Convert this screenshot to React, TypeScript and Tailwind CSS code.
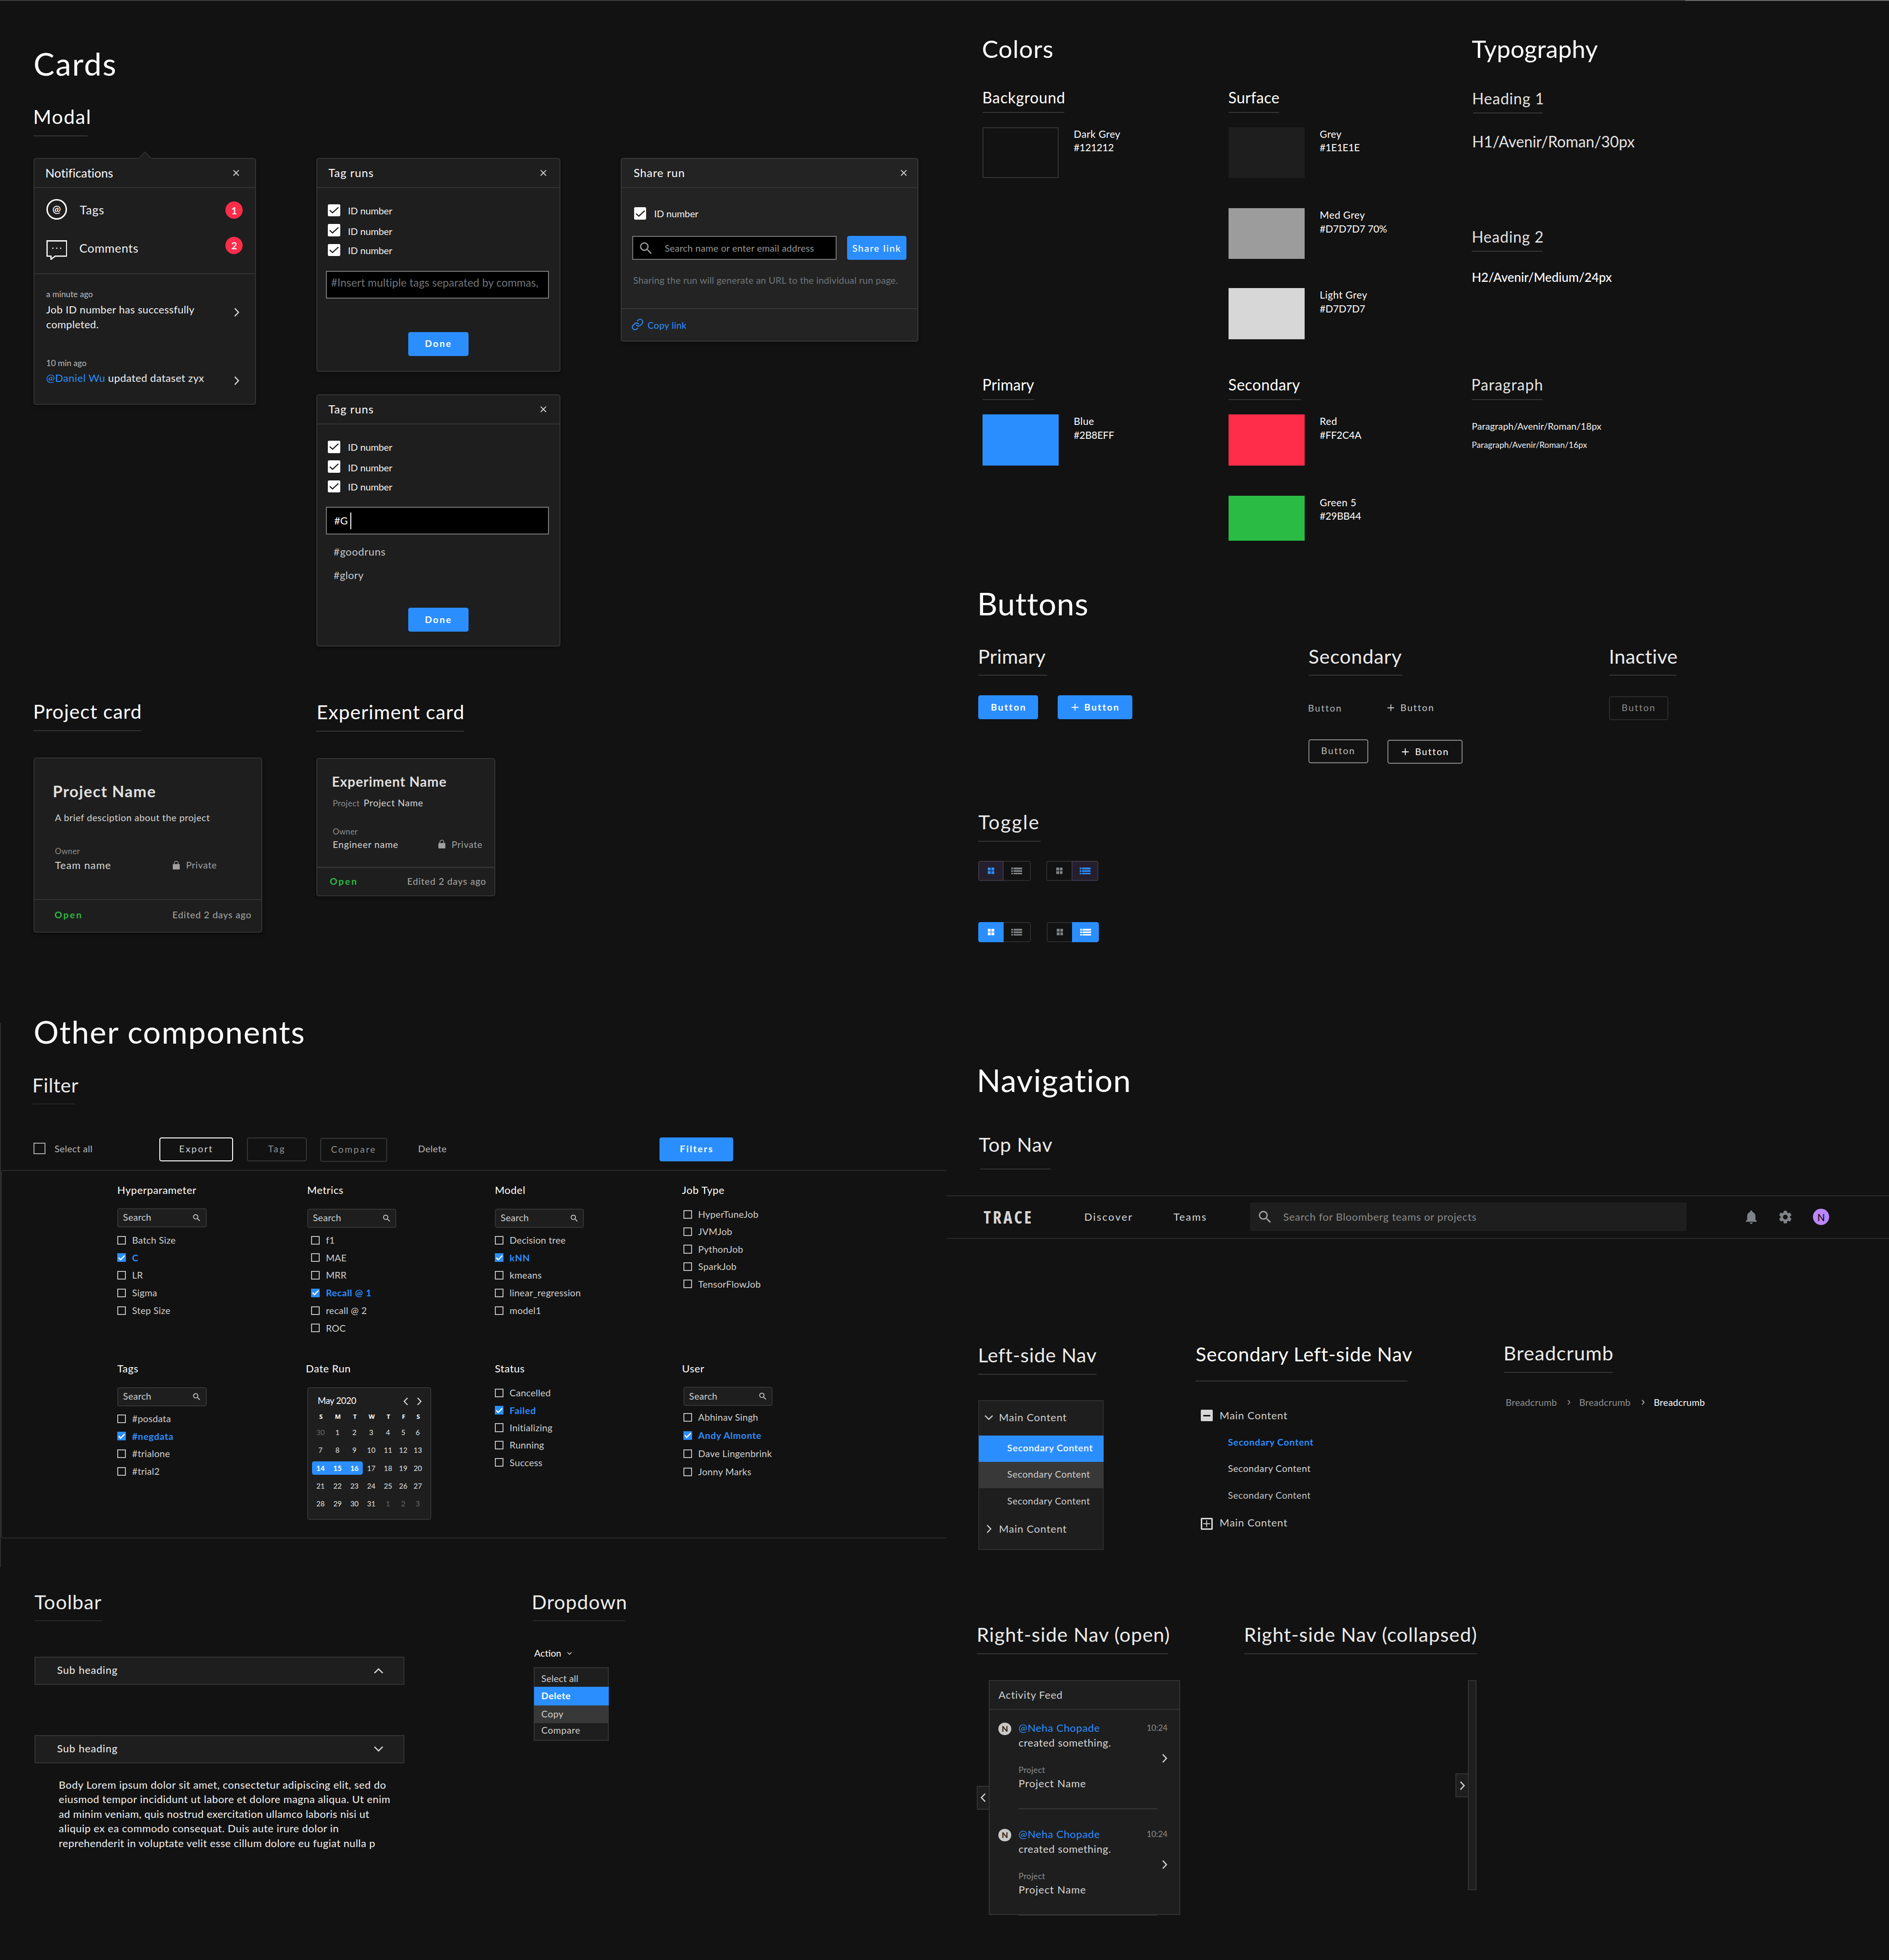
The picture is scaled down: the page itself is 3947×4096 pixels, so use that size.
import type { ReactNode } from "react";
import { MdNotifications, MdSearch, MdSettings } from "react-icons/md";
import { Link } from "lucide-react";

/* ---------- icons ---------- */

const chevronPaths = {
  right: "M1.5 1.5 L10.5 11 L1.5 20.5",
  left: "M10.5 1.5 L1.5 11 L10.5 20.5",
};

function Chevron({ dir = "right", className = "" }: { dir?: "left" | "right"; className?: string }) {
  return (
    <svg viewBox="0 0 12 22" fill="none" stroke="currentColor" strokeWidth="2.8" className={className}>
      <path d={chevronPaths[dir]} />
    </svg>
  );
}

function Caret({ up = false, className = "" }: { up?: boolean; className?: string }) {
  return (
    <svg viewBox="0 0 22 13" fill="none" stroke="currentColor" strokeWidth="2.8" className={className}>
      <path d={up ? "M1.5 11.5 L11 2 L20.5 11.5" : "M1.5 1.5 L11 11 L20.5 1.5"} />
    </svg>
  );
}

function Close() {
  return (
    <svg viewBox="0 0 14 14" stroke="#d7d7d7" strokeWidth="2" className="h-[14px] w-[14px]">
      <path d="M0.8 0.8 L13.2 13.2 M13.2 0.8 L0.8 13.2" />
    </svg>
  );
}

function Lock() {
  return (
    <svg viewBox="0 0 16 20" className="h-[20px] w-[16px]">
      <rect x="0" y="7.5" width="16" height="12.5" rx="1.5" fill="#a0a0a0" />
      <path d="M3.6 8 V5 a4.4 4.2 0 0 1 8.8 0 V8" fill="none" stroke="#a0a0a0" strokeWidth="1.6" />
    </svg>
  );
}

function GridIcon() {
  return (
    <svg viewBox="0 0 15 15" fill="currentColor" className="h-[15px] w-[15px]">
      <rect width="6.6" height="6.6" />
      <rect x="8.2" width="6.6" height="6.6" />
      <rect y="8.2" width="6.6" height="6.6" />
      <rect x="8.2" y="8.2" width="6.6" height="6.6" />
    </svg>
  );
}

function ListIcon() {
  return (
    <svg viewBox="0 0 25 16" fill="currentColor" className="h-[16px] w-[25px]">
      <path d="M0 0h4v4H0zM5.5 0H25v4H5.5zM0 6h4v4H0zM5.5 6H25v4H5.5zM0 12h4v4H0zM5.5 12H25v4H5.5z" />
    </svg>
  );
}

function PlusIcon() {
  return (
    <svg viewBox="0 0 16 16" stroke="currentColor" strokeWidth="2" className="h-[16px] w-[16px]">
      <path d="M8 0V16M0 8H16" />
    </svg>
  );
}

/* ---------- primitives ---------- */

function H1({ children, className }: { children: ReactNode; className: string }) {
  return <h1 className={`text-[72px] leading-[86px] text-white ${className}`}>{children}</h1>;
}

function H2({ children, text = "", className = "" }: { children: ReactNode; text?: string; className?: string }) {
  return (
    <div className={`border-b-[2.2px] pb-4 ${className}`}>
      <h2 className={`text-[45px] leading-[54px] ${text}`}>{children}</h2>
    </div>
  );
}

function H3({ children, text = "", className = "" }: { children: ReactNode; text?: string; className?: string }) {
  return (
    <div className={`border-b-[2.2px] border-[#363636] ${className}`}>
      <h3 className={`text-[35px] leading-[42px] ${text}`}>{children}</h3>
    </div>
  );
}

function CardHeader({ title, className }: { title: string; className: string }) {
  return (
    <div className={`flex h-[68px] items-center justify-between border-b-[2.2px] border-[#333] ${className}`}>
      <span>{title}</span>
      <Close />
    </div>
  );
}

function WhiteCheck() {
  return (
    <span className="flex h-7 w-7 items-center justify-center rounded-[3px] bg-white">
      <svg viewBox="0 0 22 16" fill="none" stroke="#1e1e1e" strokeWidth="2.6" className="h-[16px] w-[22px]">
        <path d="M1 8 L7.5 14 L21 1.5" />
      </svg>
    </span>
  );
}

function IdRow({ text = "" }: { text?: string }) {
  return (
    <div className="flex h-7 items-center">
      <WhiteCheck />
      <span className={`ml-[18px] text-[22px] tracking-[-0.14px] text-[#f2f2f2] ${text}`}>ID number</span>
    </div>
  );
}

function DoneButton({ className }: { className: string }) {
  return (
    <button
      className={`block h-[55px] w-[138px] self-center rounded-[5px] bg-[#2b8eff] pb-[2px] text-[21.5px] font-bold tracking-[2.6px] text-white ${className}`}
    >
      Done
    </button>
  );
}

/* ---------- cards ---------- */

function Notifications() {
  return (
    <div className="relative h-[568px] w-[511px] rounded-[6px] border-[2.2px] border-[#333] bg-[#1e1e1e] shadow-[0_4px_8px_rgba(0,0,0,0.3)]">
      <svg viewBox="0 0 30 18" className="absolute -top-[17px] left-[239px] h-[18px] w-[30px]">
        <path d="M0.5 17 L15 2 L29.5 17 V18 H0.5Z" fill="#1e1e1e" />
        <path d="M0 17 L15 2 L30 17" fill="none" stroke="#333" strokeWidth="2" />
      </svg>
      <CardHeader title="Notifications" className="pr-[36px] pl-[25px] text-[27.5px] tracking-[0.1px] text-white" />
      <div className="h-[197px] border-b-[2.2px] border-[#333] pr-[28px] pl-[27px] text-[27.5px] text-[#f2f2f2]">
        <div className="flex h-[97px] items-center">
          <span className="flex h-12 w-12 items-center justify-center rounded-full border-[3.3px] border-white pb-1 text-[23px] font-bold">
            @
          </span>
          <span className="ml-[29px] flex-1 pt-0.5 tracking-[0.9px]">Tags</span>
          <span className="mt-1 flex h-10 w-10 items-center justify-center rounded-full bg-[#ff2c4a] text-[23px] font-bold">
            1
          </span>
        </div>
        <div className="flex h-[82px] items-center">
          <svg viewBox="0 0 48 46" fill="none" stroke="white" strokeWidth="2.8" className="mt-2 h-[46px] w-[48px]">
            <path d="M1.5 1.5H46.5V36.5H20L10.5 44V36.5H1.5Z" />
            <path d="M13.5 18.5h2.6M22.5 18.5h2.6M31.5 18.5h2.6" />
          </svg>
          <span className="ml-[28px] flex-1 tracking-[0.7px]">Comments</span>
          <span className="mb-[13px] flex h-10 w-10 items-center justify-center rounded-full bg-[#ff2c4a] text-[23px] font-bold">
            2
          </span>
        </div>
      </div>
      <div className="pt-[35px] pr-[36px] pl-[27px]">
        <p className="text-[19px] leading-6 text-[#bdbdbd]">a minute ago</p>
        <div className="mt-1.5 flex justify-between text-[24px] leading-[34px] text-[#f2f2f2]">
          <p className="tracking-[0.42px]">
            Job ID number has successfully
            <br />
            completed.
          </p>
          <Chevron className="mt-3 h-[21px] w-[12px] text-[#d7d7d7]" />
        </div>
        <p className="mt-[60px] text-[19px] leading-6 text-[#bdbdbd]">10 min ago</p>
        <div className="mt-1.5 flex justify-between text-[24px] leading-[34px] text-[#f2f2f2]">
          <p className="tracking-[0.49px]">
            <span className="text-[#2b8eff]">@Daniel Wu</span> updated dataset zyx
          </p>
          <Chevron className="mt-3 h-[21px] w-[12px] text-[#d7d7d7]" />
        </div>
      </div>
    </div>
  );
}

function TagRuns({ children, className }: { children: ReactNode; className: string }) {
  return (
    <div
      className={`flex w-[560px] flex-col rounded-[6px] border-[2.2px] border-[#333] bg-[#1e1e1e] shadow-[0_4px_8px_rgba(0,0,0,0.3)] ${className}`}
    >
      <CardHeader title="Tag runs" className="pr-[30px] pl-[25px] text-[26px] tracking-[1.2px] text-white" />
      <div className="flex flex-col gap-[17.5px] pt-[37px] pl-[24px]">
        <IdRow />
        <IdRow text="pt-1" />
        <IdRow />
      </div>
      {children}
    </div>
  );
}

function ShareRun() {
  return (
    <div className="h-[423px] w-[683px] rounded-[6px] border-[2.2px] border-[#383838] bg-[#232323] shadow-[0_4px_8px_rgba(0,0,0,0.3)]">
      <CardHeader title="Share run" className="pr-[24px] pl-[27px] text-[26px] tracking-[1px] text-white" />
      <div className="pt-[44px] pl-[28px]">
        <IdRow />
      </div>
      <div className="mt-[38px] flex gap-6 pl-[24px]">
        <div className="flex h-[55px] w-[469px] items-center border-[2.2px] border-[#777] bg-black pl-[11px] text-[#959595]">
          <MdSearch className="h-[37px] w-[37px]" />
          <span className="ml-[24px] text-[21.5px] tracking-[0.29px]">Search name or enter email address</span>
        </div>
        <button className="h-[55px] w-[137px] rounded-[5px] bg-[#2b8eff] pb-[2px] text-[22px] font-medium tracking-[1.88px] text-white">
          Share link
        </button>
      </div>
      <p className="mt-[34px] pl-[26px] text-[21.5px] leading-[26px] tracking-[0.23px] text-[#70757a]">
        Sharing the run will generate an URL to the individual run page.
      </p>
      <div className="mt-[50px] flex h-[75px] items-center border-t-[2.2px] border-[#383838] pl-[22px] text-[#2b8eff]">
        <Link className="h-[29px] w-[29px]" strokeWidth={1.9} />
        <span className="ml-[8px] pt-0.5 text-[21.5px] tracking-[0.26px]">Copy link</span>
      </div>
    </div>
  );
}

function ProjectCard() {
  return (
    <div className="flex h-[402px] w-[525px] flex-col rounded-[6px] border-[2.2px] border-[#333] bg-[#1e1e1e] shadow-[0_4px_8px_rgba(0,0,0,0.3)]">
      <div className="flex-1 pt-[54px] pl-[47px] text-[#d7d7d7]">
        <p className="-ml-[5px] text-[36px] leading-[44px] font-bold tracking-[1.6px] text-[#e0e0e0]">Project Name</p>
        <p className="mt-[25px] text-[21.5px] leading-[26px] tracking-[0.63px]">A brief desciption about the project</p>
        <p className="mt-[52px] text-[18.5px] leading-6 tracking-[0.2px] text-[#8c8c8c]">Owner</p>
        <div className="mt-[5px] flex h-[30px] items-center text-[24px]">
          <span className="w-[271px] tracking-[1.09px]">Team name</span>
          <Lock />
          <span className="ml-[14px] text-[21.5px] tracking-[0.71px] text-[#a0a0a0]">Private</span>
        </div>
      </div>
      <div className="flex h-[75px] items-center justify-between border-t-[2.2px] border-[#333] pr-[22px] pb-[5px] pl-[46px] text-[21.5px]">
        <span className="font-bold tracking-[3px] text-[#29bb44]">Open</span>
        <span className="tracking-[0.95px] text-[#a8a8a8]">Edited 2 days ago</span>
      </div>
    </div>
  );
}

function ExperimentCard() {
  return (
    <div className="flex h-[317px] w-[411px] flex-col rounded-[6px] border-[2.2px] border-[#333] bg-[#1e1e1e] shadow-[0_4px_8px_rgba(0,0,0,0.3)]">
      <div className="flex-1 pt-[33px] pl-[35px] text-[#d7d7d7]">
        <p className="-ml-[2px] text-[31px] leading-[38px] font-bold tracking-[1.05px] text-[#e0e0e0]">Experiment Name</p>
        <div className="mt-[17px] flex h-[26px] items-center text-[21.5px]">
          <span className="w-[71px] pt-0.5 text-[19px] tracking-[0.43px] text-[#8c8c8c]">Project</span>
          <span className="tracking-[0.75px]">Project Name</span>
        </div>
        <p className="mt-[41px] text-[18.5px] leading-6 tracking-[0.2px] text-[#8c8c8c]">Owner</p>
        <div className="mt-[4px] flex h-[26px] items-center text-[21.5px]">
          <span className="w-[243px] tracking-[0.85px]">Engineer name</span>
          <Lock />
          <span className="ml-[14px] tracking-[0.71px] text-[#a0a0a0]">Private</span>
        </div>
      </div>
      <div className="flex h-[66px] items-center justify-between border-t-[3.3px] border-[#333] pr-[19px] pb-px pl-[28px] text-[21.5px]">
        <span className="font-bold tracking-[3px] text-[#29bb44]">Open</span>
        <span className="tracking-[0.95px] text-[#a8a8a8]">Edited 2 days ago</span>
      </div>
    </div>
  );
}

/* ---------- filter panel ---------- */

function SearchField({ className }: { className: string }) {
  return (
    <div
      className={`flex h-[44px] w-[205px] items-center justify-between rounded-[5px] border-[2.2px] border-[#333] bg-[#1e1e1e] pr-[9px] pb-0.5 pl-[11px] text-[21.5px] tracking-[0.29px] text-[#d0d0d0] ${className}`}
    >
      Search
      <MdSearch className="mt-0.5 h-[22px] w-[22px]" />
    </div>
  );
}

type Option = [label: string, checked?: boolean];

function Options({ items, className, row = "h-[40.4px]" }: { items: Option[]; className: string; row?: string }) {
  return (
    <ul className={`text-[21.5px] text-[#d0d0d0] ${className}`}>
      {items.map(([label, checked]) => (
        <li key={label} className={`flex items-center ${row}`}>
          {checked ? (
            <span className="flex h-5 w-5 items-center justify-center bg-[#2b8eff]">
              <svg viewBox="0 0 16 12" fill="none" stroke="white" strokeWidth="2.8" className="h-[12px] w-[16px]">
                <path d="M1 6 L5.5 10.5 L15 1" />
              </svg>
            </span>
          ) : (
            <span className="h-5 w-5 border-[2.2px] border-[#bdbdbd]" />
          )}
          <span className={checked ? "ml-[14px] font-bold tracking-[0.75px] text-[#2b8eff]" : "ml-[14px] tracking-[0.3px]"}>
            {label}
          </span>
        </li>
      ))}
    </ul>
  );
}

function FilterTitle({ children }: { children: ReactNode }) {
  return <h4 className="text-[24px] leading-[30px] tracking-[0.6px] text-white">{children}</h4>;
}

const weeks = [
  [30, 1, 2, 3, 4, 5, 6],
  [7, 8, 9, 10, 11, 12, 13],
  [14, 15, 16, 17, 18, 19, 20],
  [21, 22, 23, 24, 25, 26, 27],
  [28, 29, 30, 31, 1, 2, 3],
];

function dayClass(week: number, col: number) {
  if (week === 2 && col < 3) {
    const corner = col === 0 ? "rounded-l-[5px]" : col === 2 ? "rounded-r-[5px]" : "";
    return `bg-[#2b8eff] font-bold text-white ${corner}`;
  }
  const outside = (week === 0 && col === 0) || (week === 4 && col > 3);
  return outside ? "text-[#6a6a6a]" : "text-[#e4e4e4]";
}

function Calendar() {
  return (
    <div className="mt-[28px] h-[304px] w-[285px] rounded-[5px] border-[2.2px] border-[#333] bg-[#1e1e1e]">
      <div className="flex h-[52px] items-center pt-2 pl-[22px] text-white">
        <span className="w-[197px] text-[20.5px] tracking-[-0.4px]">May 2020</span>
        <Chevron dir="left" className="h-[19px] w-[11px] text-[#d7d7d7]" />
        <Chevron className="ml-[20px] h-[19px] w-[11px] text-[#d7d7d7]" />
      </div>
      <div className="ml-[10px] grid grid-cols-[39px_39px_39px_38px_39px_31px_36px] text-center leading-[28px] font-bold text-white">
        {["S", "M", "T", "W", "T", "F", "S"].map((d, i) => (
          <span key={i} className="font-['Open_Sans'] text-[14.5px]">{d}</span>
        ))}
      </div>
      <div className="mt-px ml-[9px] grid grid-cols-[39px_39px_39px_38px_39px_31px_36px] text-center text-[16.5px]">
        {weeks.map((week, w) =>
          week.map((day, c) => (
            <span key={`${w}-${c}`} className={`my-[5px] h-[31px] leading-[31px] ${dayClass(w, c)}`}>
              {day}
            </span>
          )),
        )}
      </div>
    </div>
  );
}

function FilterPanel() {
  return (
    <div className="mt-[20px] h-[846px] rounded-l-[6px] border-[2.2px] border-r-0 border-[#2a2a2a] pt-[29px] pl-[265px]">
      <div className="grid h-[410px] grid-cols-[436px_431px_433px_1fr] items-start">
        <div>
          <FilterTitle>Hyperparameter</FilterTitle>
          <SearchField className="mt-[27px]" />
          <Options
            className="mt-[9px]"
            items={[["Batch Size"], ["C", true], ["LR"], ["Sigma"], ["Step Size"]]}
          />
        </div>
        <div>
          <FilterTitle>Metrics</FilterTitle>
          <SearchField className="mt-[28px]" />
          <Options
            className="mt-[8px] pl-[9px]"
            items={[["f1"], ["MAE"], ["MRR"], ["Recall @ 1", true], ["recall @ 2"], ["ROC"]]}
          />
        </div>
        <div>
          <FilterTitle>Model</FilterTitle>
          <SearchField className="mt-[28px]" />
          <Options
            className="mt-[8px]"
            items={[["Decision tree"], ["kNN", true], ["kmeans"], ["linear_regression"], ["model1"]]}
          />
        </div>
        <div>
          <div className="-ml-[3px]">
            <FilterTitle>Job Type</FilterTitle>
          </div>
          <Options
            className="mt-[21px]"
            row="h-[40px]"
            items={[["HyperTuneJob"], ["JVMJob"], ["PythonJob"], ["SparkJob"], ["TensorFlowJob"]]}
          />
        </div>
      </div>
      <div className="grid grid-cols-[436px_431px_433px_1fr] items-start">
        <div>
          <FilterTitle>Tags</FilterTitle>
          <SearchField className="mt-[28px]" />
          <Options className="mt-[8px]" items={[["#posdata"], ["#negdata", true], ["#trialone"], ["#trial2"]]} />
        </div>
        <div>
          <div className="-ml-[3px]">
            <FilterTitle>Date Run</FilterTitle>
          </div>
          <Calendar />
        </div>
        <div>
          <FilterTitle>Status</FilterTitle>
          <Options
            className="mt-[21px]"
            row="h-10"
            items={[["Cancelled"], ["Failed", true], ["Initializing"], ["Running"], ["Success"]]}
          />
        </div>
        <div>
          <div className="-ml-[3px]">
            <FilterTitle>User</FilterTitle>
          </div>
          <SearchField className="mt-[27px]" />
          <Options
            className="mt-[5px]"
            row="h-[41.8px]"
            items={[["Abhinav Singh"], ["Andy Almonte", true], ["Dave Lingenbrink"], ["Jonny Marks"]]}
          />
        </div>
      </div>
    </div>
  );
}

/* ---------- toolbar & dropdown ---------- */

function Accordion({ open = false, className }: { open?: boolean; className: string }) {
  return (
    <div
      className={`flex h-[65px] w-[850px] items-center justify-between border-[2.2px] border-[#333] bg-[#1e1e1e] pr-[46px] pb-0.5 pl-[50px] text-[24px] tracking-[0.94px] text-[#f2f2f2] ${className}`}
    >
      Sub heading
      <Caret up={!open} className="mt-0.5 h-[13px] w-[22px] text-[#d7d7d7]" />
    </div>
  );
}

function ToolbarSection() {
  return (
    <section className="flex items-start pl-[79px]">
      <div className="w-[1144px]">
        <H2 className="w-[156px] border-[#2a2a2a]" text="tracking-[1.16px] text-[#ececec]">
          Toolbar
        </H2>
        <Accordion className="mt-[81px]" />
        <Accordion open className="mt-[115px]" />
        <p className="mt-[33px] ml-[56px] text-[24px] leading-[33.5px] tracking-[0.6px] text-[#f2f2f2]">
          Body Lorem ipsum dolor sit amet, consectetur adipiscing elit, sed do
          <br />
          eiusmod tempor incididunt ut labore et dolore magna aliqua. Ut enim
          <br />
          <span className="tracking-[0.48px]">ad minim veniam, quis nostrud exercitation ullamco laboris nisi ut</span>
          <br />
          aliquip ex ea commodo consequat. Duis aute irure dolor in
          <br />
          <span className="tracking-[0.5px]">reprehenderit in voluptate velit esse cillum dolore eu fugiat nulla p</span>
        </p>
      </div>
      <div>
        <H2 className="w-[212px] border-[#2a2a2a]" text="-ml-[2px] tracking-[1.15px] text-[#ececec]">
          Dropdown
        </H2>
        <div className="mt-[60px] ml-[4px] flex h-[26px] items-center text-[21.5px] text-white">
          Action
          <Caret className="mt-0.5 ml-[14px] h-[7px] w-[11px]" />
        </div>
        <div className="mt-[19px] ml-[3px] h-[169px] w-[172px] border-[2.2px] border-[#333] bg-[#1e1e1e] text-[21.5px] text-[#d0d0d0]">
          <div className="h-[43px] pt-[6px] pl-[15px] leading-[38px] tracking-[0.15px]">Select all</div>
          <div className="-mx-0.5 h-[43px] bg-[#2b8eff] pl-[17px] leading-[42px] font-bold tracking-[0.64px] text-white">Delete</div>
          <div className="-mx-0.5 h-[41px] bg-[#383838] pl-[17px] leading-[39px] tracking-[0.5px]">Copy</div>
          <div className="h-[38px] pl-[15px] leading-[34px] tracking-[0.6px]">Compare</div>
        </div>
      </div>
    </section>
  );
}

/* ---------- colors & typography ---------- */

function Swatch({ name, hex, color, className = "" }: { name: string; hex: string; color: string; className?: string }) {
  return (
    <div className={`flex text-[23px] leading-[31.5px] text-white ${className}`}>
      <div className={`w-[175px] ${color}`} />
      <p className="ml-[35px]">
        <span className="tracking-[0.5px]">{name}</span>
        <br />
        <span className="tracking-[-0.2px]">{hex}</span>
      </p>
    </div>
  );
}

function ColorsSection() {
  return (
    <section className="w-[1124px] pt-[78px] text-white">
      <h1 className="-ml-px text-[56px] leading-[68px] tracking-[1.19px]">Colors</h1>
      <div className="mt-[57px] flex h-[660px]">
        <div className="w-[565px]">
          <H3 className="w-[189px] pb-[12px]" text="tracking-[0.8px]">Background</H3>
          <Swatch name="Dark Grey" hex="#121212" color="h-[117px] border-[2.2px] border-[#333] bg-[#121212]" className="mt-[33px]" />
        </div>
        <div>
          <H3 className="w-[117px] pb-[12px]" text="tracking-[0.32px]">Surface</H3>
          <Swatch name="Grey" hex="#1E1E1E" color="h-[117px] bg-[#1e1e1e]" className="mt-[33px]" />
          <Swatch name="Med Grey" hex="#D7D7D7 70%" color="h-[117px] bg-[#9c9c9c]" className="mt-[69px]" />
          <Swatch name="Light Grey" hex="#D7D7D7" color="h-[117px] bg-[#d7d7d7]" className="mt-[67px]" />
        </div>
      </div>
      <div className="flex">
        <div className="w-[565px]">
          <H3 className="w-[119px] pb-[12px]" text="tracking-[0.04px]">Primary</H3>
          <Swatch name="Blue" hex="#2B8EFF" color="h-[117px] bg-[#2b8eff]" className="mt-[33px]" />
        </div>
        <div>
          <H3 className="w-[166px] pb-[12px]" text="tracking-[0.45px]">Secondary</H3>
          <Swatch name="Red" hex="#FF2C4A" color="h-[117px] bg-[#ff2c4a]" className="mt-[33px]" />
          <Swatch name="Green 5" hex="#29BB44" color="h-[104px] bg-[#29bb44]" className="mt-[69px]" />
        </div>
      </div>
    </section>
  );
}

function TypographySection() {
  return (
    <section className="pt-[78px] text-[#e4e4e4]">
      <h1 className="text-[56px] leading-[68px] tracking-[0.2px] text-white">Typography</h1>
      <H3 className="mt-[60px] ml-[3px] w-[160px] pb-[10px]" text="-ml-[2px] tracking-[0.97px]">Heading 1</H3>
      <p className="mt-[43px] ml-px text-[35px] leading-[44px]">H1/Avenir/Roman/30px</p>
      <H3 className="mt-[176px] w-[163px] pb-[11px]" text="tracking-[0.97px]">Heading 2</H3>
      <p className="mt-[41px] text-[28.5px] leading-[34px] font-medium text-white">H2/Avenir/Medium/24px</p>
      <H3 className="mt-[210px] w-[163px] pb-[11px]" text="-ml-px tracking-[1.17px]">Paragraph</H3>
      <p className="mt-[48px] text-[21.5px] leading-[26px] tracking-[0.09px] text-[#f2f2f2]">Paragraph/Avenir/Roman/18px</p>
      <p className="mt-[18px] text-[19px] leading-[24px] tracking-[0.15px] text-[#f2f2f2]">Paragraph/Avenir/Roman/16px</p>
    </section>
  );
}

/* ---------- buttons ---------- */

function Toggle({ active, tone, className = "" }: { active: "grid" | "list"; tone: "blue" | "purple"; className?: string }) {
  const on = tone === "blue" ? "bg-[#2b8eff] border-[#2b8eff] text-white" : "bg-[#251f2d] border-[#3c3548] text-[#2b8eff]";
  const off = "border-[#2c2c2c] text-[#808488]";
  return (
    <div className={`flex h-[46px] ${className}`}>
      <span className={`flex w-[58px] items-center justify-center rounded-l-[5px] border-[2.2px] ${active === "grid" ? on : `border-r-0 ${off}`}`}>
        <GridIcon />
      </span>
      <span className={`flex w-[62px] items-center justify-center rounded-r-[5px] border-[2.2px] ${active === "list" ? on : `border-l-0 ${off}`}`}>
        <ListIcon />
      </span>
    </div>
  );
}

function ButtonsSection() {
  return (
    <section className="pl-[74px]">
      <H1 className="-ml-[3px] tracking-[0.95px]">Buttons</H1>
      <div className="mt-[51px] flex h-[381px] items-start text-[21.5px]">
        <div className="w-[758px]">
          <H2 className="w-[158px] border-[#363636]" text="-ml-px tracking-[0.41px] text-[#ececec]">Primary</H2>
          <div className="mt-[45px] flex gap-[45px] font-bold text-white">
            <button className="h-[55px] w-[137px] rounded-[5px] bg-[#2b8eff] pb-[2px] pl-0.5 tracking-[2.6px]">Button</button>
            <button className="flex h-[55px] w-[172px] items-center justify-center gap-[13px] rounded-[5px] bg-[#2b8eff] pl-[3px] tracking-[2.6px]">
              <PlusIcon />
              Button
            </button>
          </div>
        </div>
        <div className="w-[690px]">
          <H2 className="w-[215px] border-[#363636]" text="tracking-[0.88px] text-[#ececec]">Secondary</H2>
          <div className="mt-[46px] flex h-[55px] items-center tracking-[2.22px] text-[#c8c8c8]">
            <span className="-ml-px w-[182px] pt-0.5 text-[#b4b4b4]">Button</span>
            <PlusIcon />
            <span className="ml-[14px]">Button</span>
          </div>
          <div className="mt-[45px] flex items-start gap-[44px] tracking-[2.22px]">
            <button className="h-[55px] w-[137px] rounded-[5px] border-[2.2px] border-[#888] pb-[2px] text-[#bdbdbd]">Button</button>
            <button className="mt-px flex h-[55px] w-[173px] items-center justify-center gap-[14px] rounded-[5px] border-[2.2px] border-[#888] pl-[3px] text-white">
              <PlusIcon />
              Button
            </button>
          </div>
        </div>
        <div>
          <H2 className="w-[155px] border-[#363636]" text="tracking-[0.46px] text-[#ececec]">Inactive</H2>
          <button className="mt-[47px] h-[55px] w-[137px] rounded-[5px] border-[2.2px] border-[#2c2c2c] pb-[2px] tracking-[2.22px] text-[#8a8a8a]">
            Button
          </button>
        </div>
      </div>
      <H2 className="w-[143px] border-[#363636]" text="tracking-[2.29px] text-[#ececec]">Toggle</H2>
      <div className="mt-[44px] flex gap-[36px]">
        <Toggle active="grid" tone="purple" />
        <Toggle active="list" tone="purple" />
      </div>
      <div className="mt-[95px] flex gap-[37px]">
        <Toggle active="grid" tone="blue" />
        <Toggle active="list" tone="blue" />
      </div>
    </section>
  );
}

/* ---------- navigation ---------- */

function TopNav() {
  return (
    <nav className="mt-[59px] flex h-[100px] items-center border-y-[2.2px] border-[#2a2a2a] pl-[86px] text-[24px] text-[#d7d7d7]">
      <span className="w-[231px] font-['Open_Sans'] text-[38.8px] leading-none font-bold tracking-[4.4px] [font-stretch:75%]">
        TRACE
      </span>
      <span className="w-[205px] tracking-[2.5px]">Discover</span>
      <span className="w-[176px] tracking-[2.3px]">Teams</span>
      <div className="flex h-[66px] w-[1002px] items-center rounded-[4px] bg-[#1e1e1e] pl-[15px] text-[#8a8a8a]">
        <MdSearch className="h-[38px] w-[38px] text-[#a0a0a0]" />
        <span className="ml-[23px] tracking-[0.76px]">Search for Bloomberg teams or projects</span>
      </div>
      <MdNotifications className="ml-[130px] h-[38px] w-[38px] text-[#808488]" />
      <MdSettings className="ml-[41px] h-[36px] w-[36px] text-[#808488]" />
      <span className="ml-[46px] flex h-[37px] w-[37px] items-center justify-center rounded-full bg-[#bb86fc] text-[23px] text-black">
        N
      </span>
    </nav>
  );
}

function LeftNav() {
  return (
    <div className="mt-[59px] h-[344px] w-[288px] border-[2.2px] border-[#2e2e2e] bg-[#1e1e1e] text-[21.5px] tracking-[0.58px] text-[#d0d0d0]">
      <div className="flex h-[79px] items-center pb-1 pl-[12px] text-[24px] tracking-[0.94px]">
        <Caret className="h-[12px] w-[20px]" />
        <span className="ml-[13px]">Main Content</span>
      </div>
      <div className="-mx-0.5 h-[60px] bg-[#2b8eff] pl-[66px] leading-[58px] font-bold tracking-[0.84px] text-[#e8f2ff]">
        Secondary Content
      </div>
      <div className="-mx-0.5 h-[61px] bg-[#383838] pl-[66px] leading-[58px]">Secondary Content</div>
      <div className="h-[60px] pl-[64px] leading-[60px]">Secondary Content</div>
      <div className="flex h-[66px] items-center pl-[16px] text-[24px] tracking-[0.94px]">
        <Chevron className="h-[20px] w-[12px]" />
        <span className="ml-[17px]">Main Content</span>
      </div>
    </div>
  );
}

function SecondaryNav() {
  return (
    <div className="mt-[58px] ml-[12px] text-[21.5px] tracking-[0.58px] text-[#c4c4c4]">
      <div className="flex h-10 items-center text-[24px] tracking-[0.94px] text-[#d0d0d0]">
        <span className="flex h-[27px] w-[27px] items-center justify-center rounded-[2px] bg-[#d7d7d7]">
          <span className="h-[3px] w-[16px] bg-[#121212]" />
        </span>
        <span className="ml-[16px]">Main Content</span>
      </div>
      <div className="mt-[10px] pl-[62px] leading-[61px]">
        <div className="font-bold tracking-[0.84px] text-[#2b8eff]">Secondary Content</div>
        <div className="text-[#d7d7d7]">Secondary Content</div>
        <div>Secondary Content</div>
      </div>
      <div className="mt-[16px] flex h-10 items-center text-[24px] tracking-[0.94px] text-[#d0d0d0]">
        <span className="flex h-[27px] w-[27px] items-center justify-center rounded-[2px] border-[3.3px] border-[#d7d7d7]">
          <PlusIcon />
        </span>
        <span className="ml-[16px] pb-[6px]">Main Content</span>
      </div>
    </div>
  );
}

function FeedItem({ className }: { className: string }) {
  return (
    <div className={`flex items-start pl-[20px] text-[24px] leading-[33.5px] text-[#d7d7d7] ${className}`}>
      <span className="mt-1 flex h-[29px] w-[29px] items-center justify-center rounded-full bg-[#c8c8c8] text-[19px] leading-none font-bold text-[#1e1e1e]">
        N
      </span>
      <div className="ml-[17px] w-[318px] border-b-[2.2px] border-[#383838] pb-[43px]">
        <p className="tracking-[0.81px] text-[#2b8eff]">@Neha Chopade</p>
        <p className="tracking-[0.68px]">created something.</p>
        <p className="mt-[34px] text-[19px] leading-6 tracking-[0.3px] text-[#8c8c8c]">Project</p>
        <p className="mt-[3px] leading-[30px] tracking-[1.04px]">Project Name</p>
      </div>
      <div className="-ml-[26px] flex w-[50px] flex-col items-end">
        <span className="text-[19px] tracking-[-0.2px] text-[#8c8c8c]">10:24</span>
        <Chevron className="mt-[42px] h-[21px] w-[12px]" />
      </div>
    </div>
  );
}

function NavigationSection() {
  return (
    <section className="mt-[274px]">
      <H1 className="pl-[70px] tracking-[1.5px]">Navigation</H1>
      <div className="mt-[78px] ml-[78px] w-[162px] border-b-[2.2px] border-[#363636] pb-[28px]">
        <h2 className="-ml-[3px] text-[45px] leading-[54px] tracking-[1.06px] text-[#ececec]">Top Nav</h2>
      </div>
      <TopNav />
      <div className="mt-[235px] flex h-[647px] items-start pl-[74px]">
        <div className="w-[499px] pt-[5px]">
          <H2 className="w-[271px] border-[#363636]" text="-ml-px tracking-[0.75px] text-[#ececec]">Left-side Nav</H2>
          <LeftNav />
        </div>
        <div className="w-[708px] pt-[3px]">
          <div className="w-[486px] border-b-[2.2px] border-[#363636] pb-[34px]">
            <h2 className="text-[45px] leading-[54px] tracking-[0.76px] text-white">Secondary Left-side Nav</h2>
          </div>
          <SecondaryNav />
        </div>
        <div className="pt-px">
          <H2 className="w-[250px] border-[#363636]" text="-ml-px tracking-[1.25px] text-[#ececec]">Breadcrumb</H2>
          <div className="mt-[55px] ml-[4px] flex h-[26px] items-center text-[21.5px] tracking-[0.29px] text-[#909090]">
            <span className="w-[142px]">Breadcrumb</span>
            <Chevron className="h-[12px] w-[7px] text-[#b0b0b0]" />
            <span className="ml-[20px] w-[143px]">Breadcrumb</span>
            <Chevron className="h-[12px] w-[7px] text-[#e0e0e0]" />
            <span className="ml-[21px] text-white">Breadcrumb</span>
          </div>
        </div>
      </div>
      <div className="flex items-start pl-[70px]">
        <div className="w-[615px]">
          <H2 className="w-[439px] border-[#363636]" text="tracking-[1.1px] text-[#ececec]">Right-side Nav (open)</H2>
          <div className="mt-[60px] flex items-start">
            <span className="mt-[242px] flex h-[55px] w-[28px] items-center justify-center border-[2.2px] border-r-0 border-[#333] bg-[#1e1e1e]">
              <Chevron dir="left" className="h-[21px] w-[12px] text-[#d7d7d7]" />
            </span>
            <div className="h-[539px] w-[439px] border-[2.2px] border-[#333] bg-[#1e1e1e]">
              <div className="h-[66px] border-b-[2.2px] border-[#333] pl-[20px] text-[24px] leading-[63px] tracking-[0.75px] text-[#d0d0d0]">
                Activity Feed
              </div>
              <FeedItem className="pt-[25px]" />
              <FeedItem className="pt-[41px]" />
            </div>
          </div>
        </div>
        <div>
          <H2 className="w-[534px] border-[#363636]" text="-ml-px tracking-[1.13px] text-[#ececec]">Right-side Nav (collapsed)</H2>
          <div className="mt-[60px] ml-[485px] flex items-start">
            <span className="mt-[214px] flex h-[55px] w-[28px] items-center justify-center border-[2.2px] border-r-0 border-[#333] bg-[#1e1e1e]">
              <Chevron className="h-[21px] w-[12px] text-[#d7d7d7]" />
            </span>
            <div className="h-[482px] w-[20px] border-[2.2px] border-[#333] bg-[#1e1e1e]" />
          </div>
        </div>
      </div>
    </section>
  );
}

/* ---------- page ---------- */

export default function App() {
  return (
    <div className="h-[4096px] w-[3947px] overflow-hidden bg-[#121212]">
      <main className="relative flex h-[4502px] w-[4338px] items-start bg-[#121212] font-['Lato',sans-serif] whitespace-nowrap antialiased [zoom:0.90982]">
        <div className="absolute inset-x-0 top-0 flex h-[2px]">
          <span className="w-[3870px] bg-[#3a3a3a]" />
          <span className="flex-1 bg-[#6a6a6a]" />
        </div>
        <div className="w-[2173px] shrink-0">
          <section className="h-[1607px] pt-[103px]">
            <H1 className="pl-[77px] tracking-[2.4px]">Cards</H1>
            <H2 className="mt-[52px] ml-[76px] w-[125px] border-[#363636]" text="tracking-[1.9px] text-white">
              Modal
            </H2>
            <div className="mt-[49px] flex items-start pl-[77px]">
              <Notifications />
              <div className="mx-[139px] flex flex-col gap-[51px]">
                <TagRuns className="h-[492px]">
                  <div className="mt-[34px] ml-[19px] h-[64px] w-[512px] border-[2.2px] border-[#777] bg-black pl-[10px] text-[25px] leading-[51px] tracking-[0.09px] text-[#70757a]">
                    #Insert multiple tags separated by commas,
                  </div>
                  <DoneButton className="mt-[76px]" />
                </TagRuns>
                <TagRuns className="h-[580px]">
                  <div className="mt-[33px] ml-[19px] flex h-[64px] w-[512px] items-center border-[2.2px] border-[#777] bg-black pl-[17px] text-[24px] text-white">
                    #G
                    <span className="ml-[6px] h-[38px] w-[2px] bg-white" />
                  </div>
                  <p className="mt-[24px] ml-[37px] text-[24px] leading-[30px] tracking-[0.77px] text-[#c8c8c8]">#goodruns</p>
                  <p className="mt-[24px] ml-[37px] text-[24px] leading-[30px] tracking-[0.37px] text-[#c8c8c8]">#glory</p>
                  <DoneButton className="mt-[60px]" />
                </TagRuns>
              </div>
              <ShareRun />
            </div>
          </section>

          <section className="flex h-[743px] items-start pl-[77px]">
            <div className="w-[650px]">
              <H2 className="w-[247px] border-[#363636]" text="-ml-px tracking-[1.2px] text-white">Project card</H2>
              <div className="mt-[61px]">
                <ProjectCard />
              </div>
            </div>
            <div className="pt-px">
              <H2 className="w-[338px] border-[#363636]" text="tracking-[1.2px] text-white">Experiment card</H2>
              <div className="mt-[61px]">
                <ExperimentCard />
              </div>
            </div>
          </section>

          <section className="flex h-[1250px] flex-col border-l-[2.2px] border-[#2e2e2e]">
            <H1 className="-mt-[23px] pl-[75px] tracking-[1.85px]">Other components</H1>
            <H2 className="mt-[52px] ml-[72px] w-[97px] border-[#242424]" text="tracking-[0.54px] text-[#ececec]">
              Filter
            </H2>
            <div className="mt-[75px] flex h-[55px] items-center pl-[75px] text-[21.5px] text-[#b8b8b8]">
              <span className="mb-1 h-[27px] w-[27px] border-[2.2px] border-[#a8a8a8]" />
              <span className="ml-[21px] w-[241px] pb-0.5 tracking-[0.38px]">Select all</span>
              <button className="h-[55px] w-[169px] rounded-[5px] border-[2.2px] border-white pb-0.5 tracking-[2.6px] text-[#d0d0d0]">Export</button>
              <button className="ml-[32px] h-[55px] w-[137px] rounded-[5px] border-[2.2px] border-[#363636] pb-0.5 tracking-[2.7px] text-[#8f8f8f]">Tag</button>
              <button className="mt-[3px] ml-[31px] h-[55px] w-[154px] rounded-[5px] border-[2.2px] border-[#363636] pb-0.5 tracking-[2.7px] text-[#8f8f8f]">
                Compare
              </button>
              <span className="ml-[71px] w-[554px] pb-0.5 tracking-[0.49px]">Delete</span>
              <button className="h-[55px] w-[170px] rounded-[5px] bg-[#2b8eff] pb-[3px] pl-0.5 font-bold tracking-[2.53px] text-white">Filters</button>
            </div>
            <FilterPanel />
          </section>

          <div className="pt-[52px]">
            <ToolbarSection />
          </div>
        </div>

        <div className="w-[2165px] shrink-0">
          <div className="flex h-[1343px] items-start pl-[83px]">
            <ColorsSection />
            <TypographySection />
          </div>
          <ButtonsSection />
          <NavigationSection />
        </div>
      </main>
    </div>
  );
}
